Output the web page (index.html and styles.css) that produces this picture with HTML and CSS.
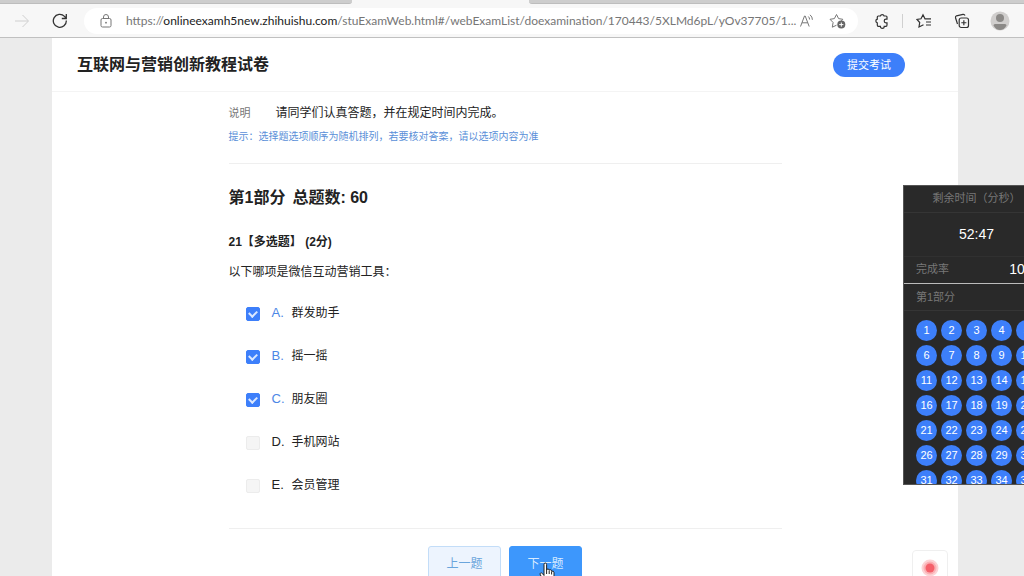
FILE: index.html
```html
<!DOCTYPE html>
<html lang="zh-CN">
<head>
<meta charset="utf-8">
<title>互联网与营销创新教程试卷</title>
<link rel="stylesheet" href="styles.css">
</head>
<body>
<div class="browser">
  <div class="tabstrip"><span class="tab-rest tab-before"></span><span class="tab-active"></span><span class="tab-rest tab-after"></span></div>
  <div class="toolbar">
    <button class="tool forward" aria-label="前进"><svg width="16" height="16" viewBox="0 0 16 16"><path d="M1 8h13M8.500 2l6 6-6 6" stroke="#cfcfcf"/></svg></button>
    <button class="tool reload" aria-label="刷新"><svg width="16" height="16" viewBox="0 0 16 16"><path d="M14.300 7.500A6.500 6.500 0 1 1 12.500 3.400L14 5M14.300 1v4.500H9.800" stroke="#333" stroke-width="1.300"/></svg></button>
    <div class="address">
      <svg class="lock" width="14" height="16" viewBox="0 0 14 16"><rect x="2" y="5.500" width="10" height="8.500" rx="1.500" stroke="#777"/><path d="M4.500 5.500V4a2.500 2.500 0 0 1 5 0v1.500" stroke="#777"/><circle cx="7" cy="9.700" r=".9" fill="#777"/></svg>
      <div class="url">https://<span class="host">onlineexamh5new.zhihuishu.com</span>/stuExamWeb.html#/webExamList/doexamination/170443/5XLMd6pL/yOv37705/1...</div>
      <button class="tool" aria-label="朗读"><svg width="16" height="16" viewBox="0 0 16 16"><path d="M1.500 13.500L5.500 3h.7l4 10.500M3 9.800h5.700M9.300 3.500q1.300 1.200 1.300 3M11 1.800q2.500 2 2.400 5" stroke="#777"/></svg></button>
      <button class="tool" aria-label="收藏"><svg width="18" height="16" viewBox="0 0 18 16"><path d="M7.500 12.200L3.300 14.200l.8-4.700L1 6.300l4.400-.7L7.500 1.500l2.100 4.100 4.200.7-1.500 1.500" stroke="#777"/><circle cx="12.300" cy="11.600" r="4" fill="#666"/><path d="M10.200 11.600h4.200M12.300 9.500v4.200" stroke="#fff"/></svg></button>
    </div>
    <button class="tool" aria-label="扩展"><svg width="16" height="16" viewBox="0 0 16 16"><path d="M4.300 3h2.100a1.900 1.900 0 0 1 3.700 0H12q1 0 1 1v2.200h-1a1.700 1.700 0 0 0 0 3.600h1V12q0 1.400-1 1.400h-1.800a1.900 1.900 0 0 1-3.800 0H4.300q-1 0-1-1.400V9.900a1.900 1.900 0 0 1 0-3.700V4q0-1 1-1z" stroke="#333" stroke-width="1.200"/></svg></button>
    <span class="divider"></span>
    <button class="tool" aria-label="收藏夹"><svg width="16" height="16" viewBox="0 0 16 16"><path d="M7.500 11.800L3 14l.7-4.500L1 6.500l4-.7 2-4 2 4h6M10 9h5M10 12h5" stroke="#333" stroke-width="1.200"/></svg></button>
    <button class="tool" aria-label="集锦"><svg width="16" height="16" viewBox="0 0 16 16"><rect x="5.200" y="5" width="9.300" height="9.500" rx="2" stroke="#333" stroke-width="1.200"/><path d="M9.850 7.200v5.100M7.300 9.750h5.100M3.500 11L1.500 4.800q-.3-1.500 1-2l6.500-1.500q1.500-.2 2 1.200" stroke="#333" stroke-width="1.200"/></svg></button>
    <button class="tool avatar" aria-label="用户"><svg width="20" height="20" viewBox="0 0 20 20"><circle cx="10" cy="10" r="9.500" fill="#d0cecd"/><circle cx="10" cy="7" r="4" fill="#8b8987"/><path d="M3.500 14.500q0-1.500 1.500-1.500h10q1.500 0 1.500 1.500Q14 19 10 19t-6.500-4.500z" fill="#8b8987"/></svg></button>
  </div>
</div>

<div class="viewport">
  <main class="sheet">
    <header class="exam-header">
      <h1 class="exam-title">互联网与营销创新教程试卷</h1>
      <button class="submit">提交考试</button>
    </header>
    <div class="paper">
      <section class="notes">
        <div class="note"><span class="note-label">说明</span><span class="note-text">请同学们认真答题，并在规定时间内完成。</span></div>
        <p class="hint">提示：选择题选项顺序为随机排列，若要核对答案，请以选项内容为准</p>
      </section>
      <h2 class="part"><span>第1部分</span><span>总题数: 60</span></h2>
      <form class="question">
        <h3 class="kind">21【多选题】 (2分)</h3>
        <p class="stem">以下哪项是微信互动营销工具：</p>
        <div class="options">
          <label class="option"><input class="box" type="checkbox" checked><span class="letter">A.</span><span>群发助手</span></label>
          <label class="option"><input class="box" type="checkbox" checked><span class="letter">B.</span><span>摇一摇</span></label>
          <label class="option"><input class="box" type="checkbox" checked><span class="letter">C.</span><span>朋友圈</span></label>
          <label class="option"><input class="box" type="checkbox"><span class="letter">D.</span><span>手机网站</span></label>
          <label class="option"><input class="box" type="checkbox"><span class="letter">E.</span><span>会员管理</span></label>
        </div>
      </form>
      <nav class="pager">
        <button class="step">上一题</button>
        <button class="step next">下一题<svg class="pointer" width="16" height="21" viewBox="0 0 16 21"><path d="M5 13.500V2.500Q5 1 6.300 1t1.300 1.500V8q.2-1 1.300-1t1.300 1.200Q10.500 7.500 11.500 7.700t1.100 1.500q2.400-.7 2.400 1.500v4q0 2.500-1.500 4v1.800H6.500v-1.600L1.300 13Q.6 11.500 1.700 11t2 .8z" fill="#fff" stroke="#222"/><path d="M7.600 8v4M10.200 8.500V12M12.600 9.500V12.500" stroke="#222"/></svg></button>
      </nav>
    </div>
  </main>
</div>

<aside class="panel">
  <div class="panel-title">剩余时间（分秒）</div>
  <div class="clock">52:47</div>
  <div class="progress"><span class="muted">完成率</span><span class="rate">100%</span></div>
  <div class="group">第1部分</div>
  <div class="numbers">
    <button class="num">1</button><button class="num">2</button><button class="num">3</button><button class="num">4</button><button class="num">5</button>
    <button class="num">6</button><button class="num">7</button><button class="num">8</button><button class="num">9</button><button class="num">10</button>
    <button class="num">11</button><button class="num">12</button><button class="num">13</button><button class="num">14</button><button class="num">15</button>
    <button class="num">16</button><button class="num">17</button><button class="num">18</button><button class="num">19</button><button class="num">20</button>
    <button class="num">21</button><button class="num">22</button><button class="num">23</button><button class="num">24</button><button class="num">25</button>
    <button class="num">26</button><button class="num">27</button><button class="num">28</button><button class="num">29</button><button class="num">30</button>
    <button class="num">31</button><button class="num">32</button><button class="num">33</button><button class="num">34</button><button class="num">35</button>
  </div>
</aside>
<button class="record" aria-label="录制"><svg width="20" height="20" viewBox="0 0 20 20"><circle cx="10" cy="10" r="8.500" fill="#fcd3d5"/><circle cx="10" cy="10" r="6.500" fill="#fab0b4"/><circle cx="10" cy="10" r="4.500" fill="#f5606a"/></svg></button>
</body>
</html>
```
FILE: styles.css
```css
* { box-sizing: border-box; }

body {
  margin: 0;
  height: 100vh;
  display: flex;
  flex-direction: column;
  overflow: hidden;
  background: #ebebeb;
  color: #222;
  font: 12px/20px "Liberation Sans", "Noto Sans CJK SC", sans-serif;
}

button {
  margin: 0;
  padding: 0;
  border: 0;
  background: none;
  font: inherit;
  color: inherit;
}

h1, h2, h3, p { margin: 0; }

svg { display: block; fill: none; }

/* Browser chrome */
.browser { flex: none; background: #f7f7f7; border-bottom: 1px solid #c0c0c0; }
.tabstrip { display: flex; height: 4px; }
.tab-rest { background: #cdcdcd; border-bottom: 1px solid #bdbdbd; }
.tab-before { width: 352px; border-bottom-right-radius: 3px; }
.tab-active { width: 177px; }
.tab-after { flex: 1; border-bottom-left-radius: 3px; }

.toolbar {
  display: flex;
  align-items: center;
  height: 33px;
  padding: 0 14px;
}
.tool { flex: none; }
.reload { margin: 0 16px 0 22px; }
.address {
  display: flex;
  align-items: center;
  flex: 1;
  min-width: 0;
  height: 26px;
  padding: 0 11px 0 15px;
  margin-right: 16px;
  border-radius: 13px;
  background: #fff;
}
.lock { flex: none; margin-right: 13px; }
.url {
  flex: 1;
  min-width: 0;
  white-space: nowrap;
  color: #767676;
  font: 12px/20px Lato, "Open Sans", sans-serif;
}
.host { color: #222; }
.address .tool { margin-left: 14px; }
.divider { width: 1px; height: 14px; margin: 0 13px 0 12px; background: #d0d0d0; }
.divider + .tool { margin-right: 22px; }
.avatar { margin-left: 20px; }

/* Exam sheet */
.viewport {
  flex: 1;
  min-height: 0;
  overflow: hidden;
  padding: 0 66px 0 52px;
}
.sheet { min-height: 100%; background: #fff; }
.exam-header {
  display: flex;
  align-items: center;
  justify-content: space-between;
  height: 54px;
  padding: 0 53px 0 25px;
  border-bottom: 1px solid #f4f4f4;
}
.exam-title { font-size: 16px; line-height: 24px; }
.submit {
  height: 24px;
  padding: 0 14px;
  border-radius: 12px;
  background: #3d7ffa;
  color: #fff;
  font-size: 11px;
}
.paper { max-width: 553px; margin: 0 auto; }
.notes { padding: 11px 0 16px; border-bottom: 1px solid #efefef; }
.note { display: flex; margin-bottom: 4px; }
.note-label { width: 47px; font-size: 11px; color: #777; }
.hint { font-size: 10px; color: #5a8fd8; }
.part {
  display: flex;
  gap: 7px;
  margin: 22px 0;
  font-size: 16px;
  line-height: 24px;
}
.kind { font-size: 12px; }
.stem { margin-top: 10px; }
.options { padding: 9px 0 0 17px; }
.option { display: flex; align-items: center; height: 43px; }
.box {
  appearance: none;
  width: 14px;
  height: 14px;
  margin: 2px 12px 0 0;
  border: 1px solid #ececec;
  border-radius: 2px;
  background: #f5f5f5;
}
.box:checked {
  border-color: #3d7ffa;
  background: #3d7ffa;
  display: grid;
  place-items: center;
}
.box:checked::before {
  content: "";
  width: 6px;
  height: 4px;
  margin-bottom: 2px;
  border: solid #dbe8ff;
  border-width: 0 0 2px 2px;
  transform: rotate(-45deg);
}
.letter { width: 20px; font-size: 13px; }
.box:checked + .letter { color: #4c87e6; }
.pager {
  display: flex;
  justify-content: center;
  gap: 8px;
  margin-top: 22px;
  padding-top: 17px;
  border-top: 1px solid #efefef;
}
.step {
  width: 73px;
  height: 36px;
  border: 1px solid #c3ddf8;
  border-radius: 3px;
  background: #edf4fe;
  color: #6aa5dc;
}
.next {
  position: relative;
  border-color: #3d97fc;
  background: #3d97fc;
  color: #d8ebff;
}
.pointer { position: absolute; left: 29px; top: 15px; }

/* Answer card, partly past the right edge of the window */
.panel {
  position: fixed;
  top: 185px;
  right: -26px;
  width: 147px;
  height: 300px;
  overflow: hidden;
  border: 1px solid #555;
  background: #292929;
  color: #fff;
}
.panel-title {
  height: 27px;
  line-height: 25px;
  border-bottom: 1px solid #353535;
  text-align: center;
  font-size: 11px;
  color: #777;
}
.clock {
  height: 44px;
  line-height: 42px;
  border-bottom: 1px solid #303030;
  text-align: center;
  font-size: 14px;
}
.progress {
  display: flex;
  justify-content: space-between;
  align-items: center;
  height: 27px;
  padding: 0 4px 2px 12px;
  border-bottom: 1px solid #bbb;
}
.muted { font-size: 11px; color: #777; }
.rate { font-size: 14px; }
.group {
  height: 27px;
  padding-left: 12px;
  line-height: 26px;
  border-bottom: 1px solid #353535;
  font-size: 11px;
  color: #777;
}
.numbers {
  display: grid;
  grid-template-columns: repeat(5, 21px);
  gap: 4px;
  padding: 9px 12px;
}
.num {
  height: 21px;
  border-radius: 50%;
  background: #3d7ffa;
  font-size: 11px;
  line-height: 21px;
}
.record {
  position: fixed;
  right: 76px;
  bottom: -10px;
  display: grid;
  place-items: center;
  width: 36px;
  height: 36px;
  border: 1px solid #efefef;
  border-radius: 4px;
  background: #fff;
}
```
